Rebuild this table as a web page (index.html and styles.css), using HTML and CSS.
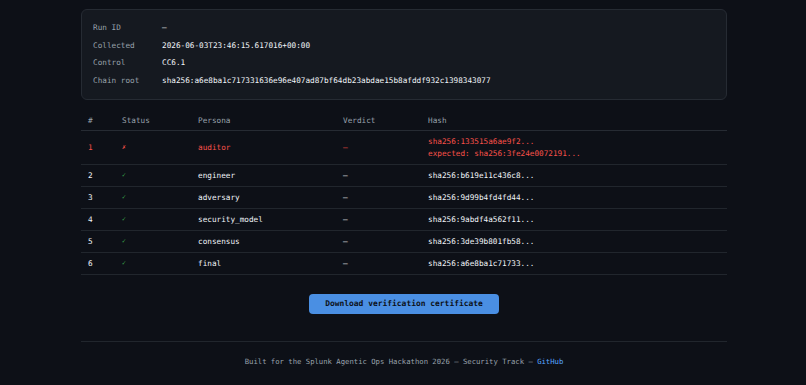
FILE: index.html
```html
<!DOCTYPE html>
<html>
<head>
<meta charset="utf-8">
<link rel="stylesheet" href="styles.css">
</head>
<body>
<div class="wrap">
  <div class="card">
    <div class="kv"><span class="k">Run ID</span><span class="v">–</span></div>
    <div class="kv"><span class="k">Collected</span><span class="v">2026-06-03T23:46:15.617016+00:00</span></div>
    <div class="kv"><span class="k">Control</span><span class="v">CC6.1</span></div>
    <div class="kv"><span class="k">Chain root</span><span class="v">sha256:a6e8ba1c717331636e96e407ad87bf64db23abdae15b8afddf932c1398343077</span></div>
  </div>
  <table class="tbl">
    <thead>
      <tr><th class="c1">#</th><th class="c2">Status</th><th class="c3">Persona</th><th class="c4">Verdict</th><th>Hash</th></tr>
    </thead>
    <tbody>
      <tr class="bad"><td>1</td><td class="st">✗</td><td>auditor</td><td>—</td><td><div class="h1">sha256:133515a6ae9f2...</div><div class="h2">expected: sha256:3fe24e0072191...</div></td></tr>
      <tr><td>2</td><td class="st ok">✓</td><td>engineer</td><td>—</td><td>sha256:b619e11c436c8...</td></tr>
      <tr><td>3</td><td class="st ok">✓</td><td>adversary</td><td>—</td><td>sha256:9d99b4fd4fd44...</td></tr>
      <tr><td>4</td><td class="st ok">✓</td><td>security_model</td><td>—</td><td>sha256:9abdf4a562f11...</td></tr>
      <tr><td>5</td><td class="st ok">✓</td><td>consensus</td><td>—</td><td>sha256:3de39b801fb58...</td></tr>
      <tr><td>6</td><td class="st ok">✓</td><td>final</td><td>—</td><td>sha256:a6e8ba1c71733...</td></tr>
    </tbody>
  </table>
  <div class="actions"><button class="btn">Download verification certificate</button></div>
  <footer class="foot">Built for the Splunk Agentic Ops Hackathon 2026 — Security Track — <a href="#">GitHub</a></footer>
</div>
</body>
</html>
```
FILE: styles.css
```css
html, body {
  margin: 0;
  padding: 0;
  background: #0d1017;
  height: 100%;
}
body {
  font-family: "DejaVu Sans Mono", monospace;
  font-size: 7.7px;
  color: #f0f4f8;
}
.wrap {
  width: 646px;
  margin: 0 auto;
  padding-top: 9px;
  transform: translateX(1px);
}
.card {
  background: #151920;
  border: 1px solid #262b33;
  border-radius: 6px;
  padding: 9px 11px;
}
.kv {
  display: flex;
  line-height: 17.7px;
}
.k {
  width: 69px;
  color: #98a1ab;
}
.v {
  color: #f0f4f8;
}
.tbl {
  width: 100%;
  border-collapse: collapse;
  margin-top: 6px;
}
.tbl th {
  text-align: left;
  font-weight: normal;
  color: #98a1ab;
  padding: 9px 7px 3px;
  line-height: 12px;
  border-bottom: 1px solid #262b33;
}
.tbl td {
  padding: 4px 7px;
  line-height: 13px;
  border-bottom: 1px solid #21262d;
  vertical-align: middle;
  color: #f0f4f8;
}
.c1 { width: 20px; }
.c2 { width: 62px; }
.c3 { width: 131px; }
.c4 { width: 71px; }
.tbl tr.bad td { color: #f85149; }
.st { font-size: 6.5px; }
.st.ok { color: #3fb950; }
.tbl tr.bad td.st { color: #f85149; }
.h1 { line-height: 13px; }
.h2 { line-height: 12px; }
.actions {
  display: flex;
  justify-content: center;
  padding-top: 19px;
  padding-bottom: 27px;
  border-bottom: 1px solid #21262d;
}
.btn {
  font-family: "DejaVu Sans Mono", monospace;
  font-size: 7.95px;
  font-weight: bold;
  color: #0d1117;
  background: #4a8fe3;
  border: none;
  border-radius: 4px;
  width: 190px;
  height: 20px;
  padding: 0;
}
.foot {
  text-align: center;
  color: #98a1ab;
  font-size: 7.25px;
  padding-top: 15px;
  line-height: 10px;
}
.foot a {
  color: #58a6ff;
  text-decoration: none;
}
```
